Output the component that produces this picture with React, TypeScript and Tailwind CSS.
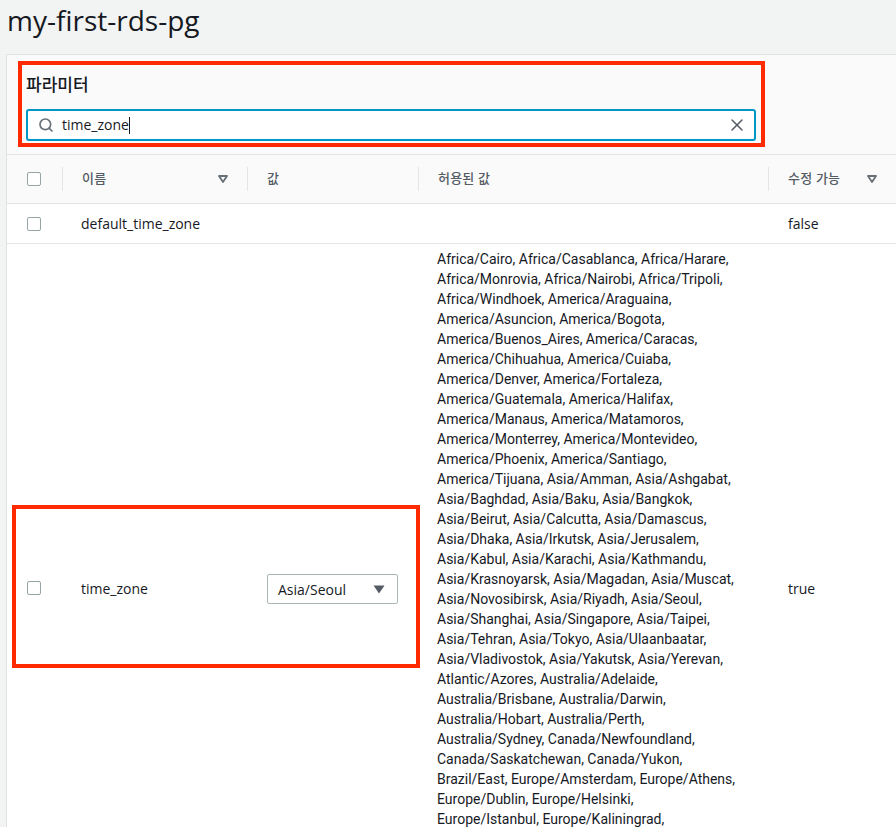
import { Search, X } from 'lucide-react'

const ALLOWED_LINES = [
  'Africa/Cairo, Africa/Casablanca, Africa/Harare,',
  'Africa/Monrovia, Africa/Nairobi, Africa/Tripoli,',
  'Africa/Windhoek, America/Araguaina,',
  'America/Asuncion, America/Bogota,',
  'America/Buenos_Aires, America/Caracas,',
  'America/Chihuahua, America/Cuiaba,',
  'America/Denver, America/Fortaleza,',
  'America/Guatemala, America/Halifax,',
  'America/Manaus, America/Matamoros,',
  'America/Monterrey, America/Montevideo,',
  'America/Phoenix, America/Santiago,',
  'America/Tijuana, Asia/Amman, Asia/Ashgabat,',
  'Asia/Baghdad, Asia/Baku, Asia/Bangkok,',
  'Asia/Beirut, Asia/Calcutta, Asia/Damascus,',
  'Asia/Dhaka, Asia/Irkutsk, Asia/Jerusalem,',
  'Asia/Kabul, Asia/Karachi, Asia/Kathmandu,',
  'Asia/Krasnoyarsk, Asia/Magadan, Asia/Muscat,',
  'Asia/Novosibirsk, Asia/Riyadh, Asia/Seoul,',
  'Asia/Shanghai, Asia/Singapore, Asia/Taipei,',
  'Asia/Tehran, Asia/Tokyo, Asia/Ulaanbaatar,',
  'Asia/Vladivostok, Asia/Yakutsk, Asia/Yerevan,',
  'Atlantic/Azores, Australia/Adelaide,',
  'Australia/Brisbane, Australia/Darwin,',
  'Australia/Hobart, Australia/Perth,',
  'Australia/Sydney, Canada/Newfoundland,',
  'Canada/Saskatchewan, Canada/Yukon,',
  'Brazil/East, Europe/Amsterdam, Europe/Athens,',
  'Europe/Dublin, Europe/Helsinki,',
  'Europe/Istanbul, Europe/Kaliningrad,',
]

const ROW_GRID = 'grid grid-cols-[55px_185px_171px_350px_1fr]'

function Checkbox() {
  return <span className="block h-[14px] w-[14px] rounded-[2px] border border-[#95a5a6] bg-white" />
}

function SortCaret() {
  return (
    <svg width="10" height="8" viewBox="0 0 10 8" className="shrink-0">
      <path d="M1 1h8L5 7z" fill="none" stroke="#687078" strokeWidth="1.8" strokeLinejoin="round" />
    </svg>
  )
}

function HeaderCell({ label, sort }: { label: string; sort?: boolean }) {
  return (
    <div className="flex h-6 items-center justify-between border-l border-[#e4e6e6] px-[19px]">
      <span className="text-[13px] font-medium tracking-[0.2px] text-[#545b64]">{label}</span>
      {sort && <SortCaret />}
    </div>
  )
}

export default function App() {
  return (
    <div
      className="relative h-[827px] w-[896px] overflow-hidden bg-[#f2f3f3] text-[14px] text-[#16191f]"
      style={{ fontFamily: '"Open Sans", "Noto Sans CJK KR", sans-serif' }}
    >
      <h1 className="h-[54px] pl-[7px] text-[28px] leading-[40px] text-[#16191f]">my-first-rds-pg</h1>

      <div className="ml-[6px] border-l border-t border-[#dfe2e2] bg-white">
        {/* Parameter search */}
        <div className="h-[100px] border-b border-[#e4e6e6] bg-[#fafafa] pl-[19px] pr-[140px] pt-[18px]">
          <h2 className="text-[17px] font-medium leading-[24px] text-[#16191f]">파라미터</h2>
          <div className="mt-[12px] flex h-8 items-center rounded-[3px] border-2 border-[#0097c4] bg-white pl-[10px] pr-[7px]">
            <Search className="h-4 w-4 text-[#687078]" strokeWidth={2.5} />
            <span className="ml-[8px] leading-none text-[#16191f]">time_zone</span>
            <span className="h-[17px] w-px bg-[#16191f]" />
            <X className="ml-auto h-5 w-5 text-[#545b64]" strokeWidth={1.75} />
          </div>
        </div>

        {/* Table header */}
        <div className={`${ROW_GRID} h-[49px] items-center border-b border-[#e4e6e6] bg-[#fafafa]`}>
          <div className="pl-5">
            <Checkbox />
          </div>
          <HeaderCell label="이름" sort />
          <HeaderCell label="값" />
          <HeaderCell label="허용된 값" />
          <HeaderCell label="수정 가능" sort />
        </div>

        {/* Rows */}
        <div className={`${ROW_GRID} h-[40px] items-center border-b border-[#e4e6e6]`}>
          <div className="pl-5">
            <Checkbox />
          </div>
          <div className="pl-[19px]">default_time_zone</div>
          <div />
          <div />
          <div className="pl-5">false</div>
        </div>

        <div className={`${ROW_GRID} h-[688px] items-center`}>
          <div className="pl-5">
            <Checkbox />
          </div>
          <div className="pl-[19px]">time_zone</div>
          <div className="pl-5">
            <div className="mt-[2px] flex h-[30px] w-[131px] items-center justify-between rounded-[2px] border border-[#aab7b8] bg-white pl-[10px] pr-[12px]">
              <span>Asia/Seoul</span>
              <svg width="12" height="9" viewBox="0 0 12 9">
                <path d="M0.5 0.5h11L6 8.5z" fill="#545b64" />
              </svg>
            </div>
          </div>
          <div
            className="self-start whitespace-nowrap pl-[19px] pt-[5px] text-[14px] leading-[20px]"
            style={{ fontFamily: 'Roboto, sans-serif' }}
          >
            {ALLOWED_LINES.map((line) => (
              <div key={line}>{line}</div>
            ))}
          </div>
          <div className="pl-5">true</div>
        </div>
      </div>

      {/* Red annotation boxes */}
      <div className="absolute left-[18px] top-[61px] h-[86px] w-[747px] border-4 border-[#ff2a00]" />
      <div className="absolute left-[12px] top-[505px] h-[163px] w-[408px] border-4 border-[#ff2a00]" />
    </div>
  )
}
